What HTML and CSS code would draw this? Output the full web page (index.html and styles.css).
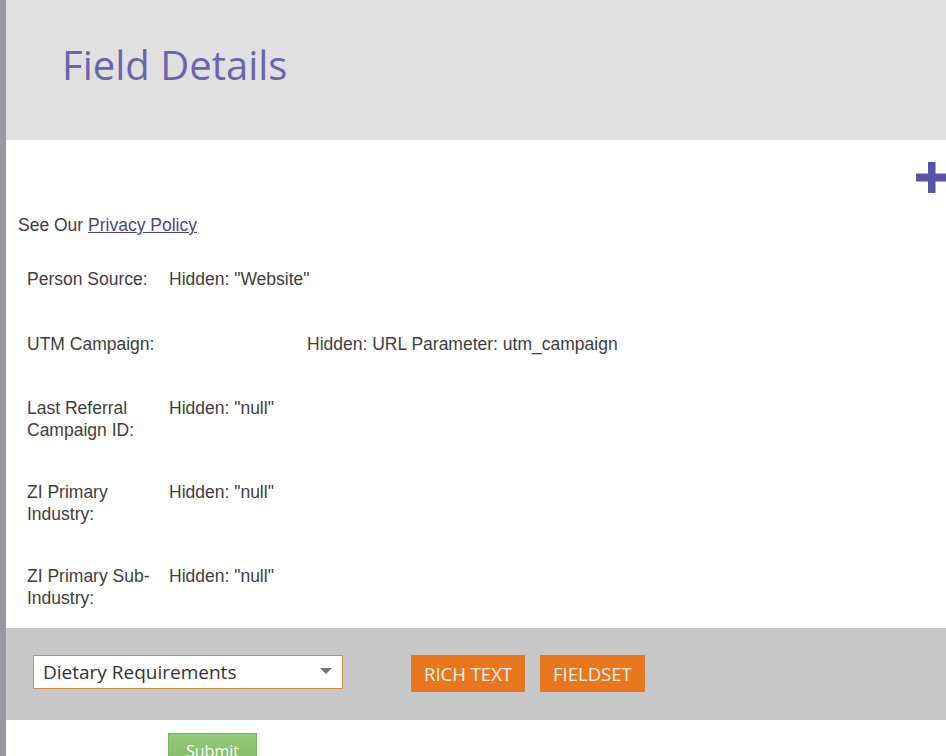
FILE: index.html
```html
<!DOCTYPE html>
<html lang="en">
<head>
<meta charset="utf-8">
<title>Field Details</title>
<link rel="stylesheet" href="styles.css">
</head>
<body>
<div class="page">
  <div class="rail"></div>
  <main class="main">
    <header class="header">
      <h1 class="title">Field Details</h1>
    </header>
    <section class="content">
      <div class="add-row">
        <svg class="plus" width="31" height="31" viewBox="0 0 31 31" aria-hidden="true">
          <rect x="12" y="0" width="7.5" height="31" fill="#5a54a6"/>
          <rect x="0" y="11.5" width="31" height="8" fill="#5a54a6"/>
        </svg>
      </div>
      <p class="privacy">See Our <a href="#" class="link">Privacy Policy</a></p>
      <div class="fields">
        <div class="field">
          <div class="label">Person Source:</div>
          <div class="value">Hidden: "Website"</div>
        </div>
        <div class="field field-wide">
          <div class="label">UTM Campaign:</div>
          <div class="value">Hidden: URL Parameter: utm_campaign</div>
        </div>
        <div class="field">
          <div class="label">Last Referral Campaign ID:</div>
          <div class="value">Hidden: "null"</div>
        </div>
        <div class="field">
          <div class="label">ZI Primary Industry:</div>
          <div class="value">Hidden: "null"</div>
        </div>
        <div class="field">
          <div class="label">ZI Primary Sub-Industry:</div>
          <div class="value">Hidden: "null"</div>
        </div>
      </div>
    </section>
    <section class="toolbar">
      <div class="select">
        <span class="select-text">Dietary Requirements</span>
        <span class="caret"></span>
      </div>
      <div class="actions">
        <button class="btn-orange">RICH TEXT</button>
        <button class="btn-orange">FIELDSET</button>
      </div>
    </section>
    <section class="footer">
      <button class="submit">Submit</button>
    </section>
  </main>
</div>
</body>
</html>
```

FILE: styles.css
```css
html, body {
  margin: 0;
  padding: 0;
  background: #ffffff;
  height: 100%;
  overflow: hidden;
}

.page {
  display: flex;
  min-height: 756px;
}

.rail {
  width: 6px;
  flex: none;
  background: #99989e;
}

.main {
  flex: 1;
  min-width: 0;
  display: flex;
  flex-direction: column;
}

.header {
  height: 140px;
  background: #e0e0e0;
  padding-left: 56px;
  box-sizing: border-box;
}

.title {
  margin: 0;
  padding-top: 36px;
  font-family: "Open Sans", sans-serif;
  font-weight: 400;
  font-size: 40px;
  line-height: 58px;
  color: #6b66ab;
}

.content {
  font-family: "Liberation Sans", Arial, sans-serif;
  font-size: 17.5px;
  color: #3e3e3e;
}

.add-row {
  display: flex;
  justify-content: flex-end;
  padding-top: 22px;
  height: 31px;
  margin-right: -1px;
}

.plus {
  display: block;
}

.privacy {
  margin: 21px 0 0 12px;
  line-height: 22px;
}

.link {
  color: #4b4490;
  text-decoration: underline;
}

.fields {
  display: flex;
  flex-direction: column;
  gap: 40px;
  padding: 32px 0 19px 21px;
}

.field {
  display: flex;
  line-height: 22px;
  min-height: 24.5px;
}

.label {
  width: 132px;
  margin-right: 10px;
  flex: none;
}

.field-wide .label {
  width: 270px;
}

.toolbar {
  background: #c8c8c8;
  height: 92px;
  box-sizing: border-box;
  padding: 27px 0 0 27px;
  display: flex;
  align-items: flex-start;
  gap: 68px;
}

.select {
  width: 310px;
  height: 34px;
  box-sizing: border-box;
  border: 1px solid #d68a45;
  background: #ffffff;
  display: flex;
  align-items: center;
  justify-content: space-between;
  padding: 0 10px 0 9px;
  font-family: "Open Sans", sans-serif;
  font-size: 19px;
  color: #333333;
}

.select-text {
  line-height: 32px;
}

.caret {
  width: 0;
  height: 0;
  border-left: 6px solid transparent;
  border-right: 6px solid transparent;
  border-top: 6px solid #777777;
  margin-top: -3px;
}

.actions {
  display: flex;
  gap: 15px;
}

.btn-orange {
  height: 37px;
  padding: 0 13px;
  border: none;
  background: #e8771f;
  color: #fff4e8;
  font-family: "Open Sans", sans-serif;
  font-size: 18.5px;
  font-weight: 500;
  cursor: pointer;
}

.footer {
  flex: 1;
  padding: 13px 0 0 162px;
}

.submit {
  width: 89px;
  height: 36px;
  border: 1px solid #7fb35e;
  background: linear-gradient(#93c977, #82bb63);
  color: #ffffff;
  font-family: "Open Sans", sans-serif;
  font-size: 16px;
  padding: 0;
  line-height: 34px;
}
```
